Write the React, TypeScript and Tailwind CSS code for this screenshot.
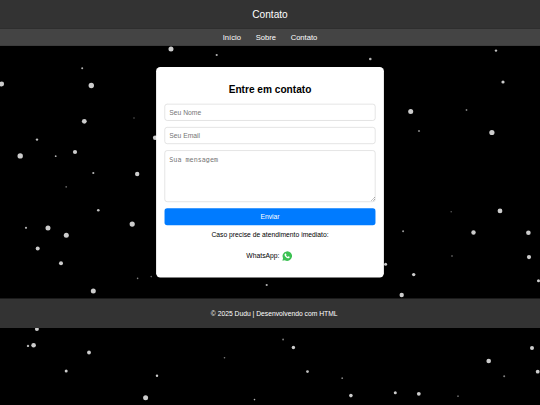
const stars: [number, number, number, number][] = [
  [171, 49, 2.5, 0.8], [216.7, 55, 1.1, 0.7], [370.3, 59, 1.3, 0.7], [82.2, 68.2, 1, 0.7],
  [1.7, 84, 2.4, 0.8], [91.3, 85.5, 2.7, 0.8], [84.3, 121.3, 2.4, 0.8], [134, 118, 1, 0.2],
  [155.2, 137.8, 2.3, 0.8], [37, 139.6, 1.2, 0.75], [20.2, 155.9, 2.7, 0.8], [55.7, 156.2, 0.9, 0.7],
  [75, 152, 2.1, 0.8], [93.3, 173, 1.1, 0.7], [137.2, 174, 2.2, 0.8], [66.2, 186.8, 0.9, 0.4],
  [98.3, 210.3, 1.3, 0.75], [132.2, 224.1, 2.6, 0.8], [26, 227.8, 1.1, 0.7], [48, 227.9, 2.5, 0.8],
  [66.3, 235.2, 2.5, 0.8], [37.7, 248.6, 2, 0.8], [61, 263.2, 2, 0.8], [93.3, 291, 2.5, 0.8],
  [137.6, 278.4, 0.8, 0.5], [151.2, 276.6, 0.8, 0.4], [496, 50.6, 1.2, 0.75], [503, 82, 1.6, 0.8],
  [410.7, 111.5, 2.5, 0.8], [466.5, 110, 0.9, 0.5], [419, 131, 1.1, 0.5], [491.9, 132.5, 2.6, 0.8],
  [451.2, 211.8, 0.8, 0.35], [500, 210.9, 2.4, 0.8], [403.1, 231.2, 1, 0.6], [473.5, 232.5, 2.2, 0.8],
  [528.4, 232.7, 2.3, 0.8], [452, 256, 1, 0.3], [529, 257.1, 2.1, 0.8], [385.6, 264.3, 1.5, 0.8],
  [413.7, 274.6, 1.7, 0.8], [538.5, 280.7, 1.5, 0.8], [401.7, 295, 2.2, 0.8], [266.7, 285, 1.1, 0.7],
  [36.9, 329, 2, 0.8], [28, 345.9, 1.2, 0.7], [33.6, 345.2, 2.3, 0.8], [89, 352.5, 1.9, 0.8],
  [66.2, 371, 1.5, 0.8], [157, 375.7, 1.2, 0.8], [224.5, 357.8, 0.8, 0.5], [145.6, 397.7, 2.5, 0.8],
  [254.5, 399.6, 0.8, 0.7], [283.1, 339.5, 0.9, 0.5], [293.4, 347.5, 1.7, 0.8], [307.5, 371.6, 1.4, 0.75],
  [342.2, 378.2, 0.9, 0.5], [350.9, 395.6, 1.8, 0.8], [395.3, 392.8, 1.5, 0.8], [418.8, 393.8, 1.9, 0.8],
  [458, 396.2, 0.9, 0.4], [488.7, 361, 2.3, 0.8], [504.2, 376.2, 1, 0.5], [532, 348, 2, 0.8],
  [537.7, 371.7, 1.9, 0.8],
];

function Starfield() {
  return (
    <svg className="absolute inset-0 h-full w-full" viewBox="0 0 540 405" aria-hidden="true">
      {stars.map(([x, y, r, o]) => (
        <circle key={`${x}-${y}`} cx={x} cy={y} r={r} fill="white" fillOpacity={o} />
      ))}
    </svg>
  );
}

function WhatsAppIcon() {
  return (
    <svg className="size-[19px]" viewBox="0 0 24 24" aria-label="WhatsApp">
      <path fill="#3cc153" d="M.5 23.5l1.7-6A11.4 11.4 0 1 1 6.3 21.9z" />
      <path
        fill="white"
        d="M8 5.8c.5-.2 1-.1 1.2.4l1 2.3c.1.4 0 .7-.8 1.7.8 1.7 2.2 3.1 4.1 3.9.9-1.1 1.2-1.5 1.7-1.3l2.5 1.2c.4.2.4.5.3 1-.3 1.5-1.7 2.6-3.5 2.4-4.3-.5-8.3-4.4-8.800-7.900-.2-1.500.8-3.100 2.300-3.700z"
      />
    </svg>
  );
}

const field =
  "block w-full rounded-[5px] border border-[#ccc] bg-white px-2 text-[12.8px] placeholder:text-[#757575] outline-none";

export default function App() {
  return (
    <div className="h-[405px] w-[540px] overflow-hidden bg-black">
      <div className="relative h-[768px] w-[1024px] origin-top-left scale-[0.52734] overflow-hidden bg-black font-['Liberation_Sans',Arial,sans-serif] text-[12.8px] text-black">
        <Starfield />
        <div className="relative flex flex-col items-center">
          <header className="flex h-[54px] w-full items-center justify-center bg-[#333] pt-0.5 text-[19.2px] text-white">
            Contato
          </header>
          <nav className="flex h-[33px] w-full items-center justify-center gap-7 bg-[#444] pt-px text-[14.4px] text-white">
            <a>Início</a>
            <a>Sobre</a>
            <a>Contato</a>
          </nav>
          <main className="mt-10 h-[399px] w-[432px] rounded-lg bg-white px-4 pt-[33px] text-center">
            <h2 className="text-[19.2px] leading-[22px] font-bold">Entre em contato</h2>
            <form className="mt-[15px] flex flex-col gap-3">
              <input className={`${field} h-8`} placeholder="Seu Nome" />
              <input className={`${field} h-8`} placeholder="Seu Email" />
              <textarea
                className={`${field} h-[98px] resize-y pt-[9px] pb-2 font-['DejaVu_Sans_Mono',monospace] leading-[15px]`}
                placeholder="Sua mensagem"
              />
              <button type="button" className="h-8 rounded-[5px] bg-[#007bff] text-white">
                Enviar
              </button>
            </form>
            <p className="mt-[11px] leading-[15px]">Caso precise de atendimento imediato:</p>
            <p className="mt-[23px] flex items-center justify-center gap-[5px] pr-[3px] leading-[19px]">
              WhatsApp: <WhatsAppIcon />
            </p>
          </main>
          <footer className="mt-10 flex h-14 w-full items-center justify-center bg-[#333] pt-px pl-4 text-white">
            © 2025 Dudu | Desenvolvendo com HTML
          </footer>
        </div>
      </div>
    </div>
  );
}
